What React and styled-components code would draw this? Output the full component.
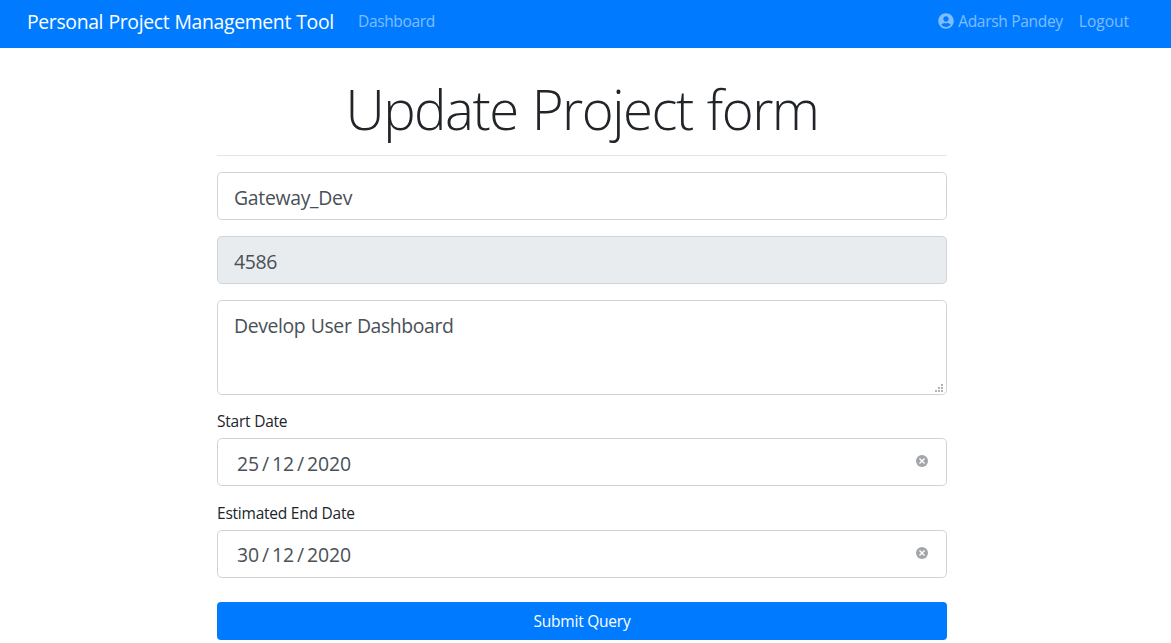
import React from 'react';
import styled, { createGlobalStyle } from 'styled-components';

const GlobalStyle = createGlobalStyle`
  *, *::before, *::after { box-sizing: border-box; }
  body {
    margin: 0;
    overflow: hidden;
    background: #fff;
    color: #212529;
    font: 400 15.5px/24px "Segoe UI", "Open Sans", "Noto Sans", sans-serif;
  }
`;

const Navbar = styled.nav`
  display: flex;
  align-items: center;
  height: 48px;
  padding: 0 42px 4px 27px;
  background: #007bff;
`;

const Brand = styled.a`
  width: 307px;
  margin-right: 24px;
  color: #fff;
  font-size: 19.4px;
  line-height: 30px;
  letter-spacing: -0.35px;
  word-spacing: 0.6px;
  white-space: nowrap;
`;

const NavLink = styled.a`
  display: flex;
  align-items: center;
  padding-bottom: 2px;
  color: rgba(255, 255, 255, 0.5);
  letter-spacing: ${(p) => p.$spacing || '0'};
  white-space: nowrap;
`;

const NavEnd = styled.div`
  display: flex;
  gap: 16px;
  margin-left: auto;
`;

const UserIcon = styled.svg`
  width: 16px;
  height: 16px;
  margin-right: 4px;
  fill: currentColor;
`;

const Form = styled.form`
  display: flex;
  flex-direction: column;
  width: 730px;
  margin: 24px 0 0 217px;
`;

const Title = styled.h1`
  height: 84px;
  margin: 0 0 16px;
  padding-top: 4px;
  border-bottom: 1px solid #e5e5e5;
  font-size: 54.5px;
  font-weight: 300;
  line-height: 66px;
  letter-spacing: -1.5px;
  word-spacing: 1.5px;
  text-align: center;
  white-space: nowrap;
`;

const control = `
  display: block;
  width: 100%;
  margin: 0;
  border: 1px solid #ced4da;
  border-radius: 4.8px;
  color: #495057;
  font-family: inherit;
  font-size: 19.4px;
  line-height: 30px;
  outline: none;
`;

const Input = styled.input`
  ${control}
  height: 48px;
  margin-bottom: 16px;
  padding: 9px 16px 7px;
  background: ${(p) => (p.readOnly ? '#e9ecef' : '#fff')};
  letter-spacing: -0.3px;
`;

const TextareaWrap = styled.div`
  position: relative;
  height: 95px;
  margin-bottom: 15px;
`;

const Textarea = styled.textarea`
  ${control}
  height: 95px;
  padding: 10px 16px 6px;
  letter-spacing: -0.38px;
  word-spacing: 0.8px;
  resize: none;
  overflow: hidden;
`;

const Grip = styled.svg`
  position: absolute;
  right: 3px;
  bottom: 2px;
  width: 9px;
  height: 9px;
  fill: #b3b3b3;
`;

const Label = styled.label`
  height: 28px;
  line-height: 22px;
  color: #212529;
  letter-spacing: -0.23px;
`;

const DateField = styled.div`
  ${control}
  display: flex;
  align-items: flex-start;
  justify-content: space-between;
  height: 48px;
  margin-bottom: ${(p) => p.$gap};
  padding: ${(p) => p.$top} 18px 0 19px;
  background: #fff;
`;

const DateParts = styled.div`
  display: flex;
  gap: 3px;
  letter-spacing: -0.08px;
`;

const ClearIcon = styled.svg`
  width: 12px;
  height: 12px;
  margin-top: ${(p) => p.$top};
`;

const Submit = styled.button`
  height: 38px;
  padding: 0;
  border: 0;
  border-radius: 4px;
  background: #007bff;
  color: #fff;
  font: inherit;
  letter-spacing: -0.23px;
`;

function DateInput({ day, month, year, gap, top = 10 }) {
  return (
    <DateField $gap={gap} $top={`${top}px`}>
      <DateParts>
        <span>{day}</span>
        <span>/</span>
        <span>{month}</span>
        <span>/</span>
        <span>{year}</span>
      </DateParts>
      <ClearIcon viewBox="0 0 12 12" $top={`${16 - top}px`}>
        <circle cx="6" cy="6" r="6" fill="#a2a5a9" />
        <path d="M3.5 3.5 8.5 8.5M8.5 3.5 3.5 8.5" stroke="#fff" strokeWidth="1.4" />
      </ClearIcon>
    </DateField>
  );
}

export default function App() {
  return (
    <>
      <GlobalStyle />
      <Navbar>
        <Brand>Personal Project Management Tool</Brand>
        <NavLink $spacing="-0.35px">Dashboard</NavLink>
        <NavEnd>
          <NavLink $spacing="-0.3px">
            <UserIcon viewBox="0 0 496 512">
              <path d="M248 8C111 8 0 119 0 256s111 248 248 248 248-111 248-248S385 8 248 8zm0 96c48.600 0 88 39.400 88 88s-39.400 88-88 88-88-39.400-88-88 39.400-88 88-88zm0 344c-58.700 0-111.300-26.600-146.500-68.200 18.800-35.400 55.600-59.800 98.500-59.800 2.400 0 4.800.4 7.100 1.100 13 4.200 26.600 6.900 40.900 6.900 14.300 0 28-2.700 40.900-6.900 2.300-.7 4.700-1.100 7.100-1.100 42.900 0 79.700 24.400 98.500 59.800C359.300 421.400 306.700 448 248 448z" />
            </UserIcon>
            Adarsh Pandey
          </NavLink>
          <NavLink>Logout</NavLink>
        </NavEnd>
      </Navbar>
      <Form>
        <Title>Update Project form</Title>
        <Input defaultValue="Gateway_Dev" />
        <Input defaultValue="4586" readOnly />
        <TextareaWrap>
          <Textarea defaultValue="Develop User Dashboard" />
          <Grip viewBox="0 0 9 9">
            <path d="M6 0h2v2H6zM3 3h2v2H3zM6 3h2v2H6zM0 6h2v2H0zM3 6h2v2H3zM6 6h2v2H6z" />
          </Grip>
        </TextareaWrap>
        <Label>Start Date</Label>
        <DateInput day="25" month="12" year="2020" gap="16px" />
        <Label>Estimated End Date</Label>
        <DateInput day="30" month="12" year="2020" gap="24px" top={9} />
        <Submit type="button">Submit Query</Submit>
      </Form>
    </>
  );
}
